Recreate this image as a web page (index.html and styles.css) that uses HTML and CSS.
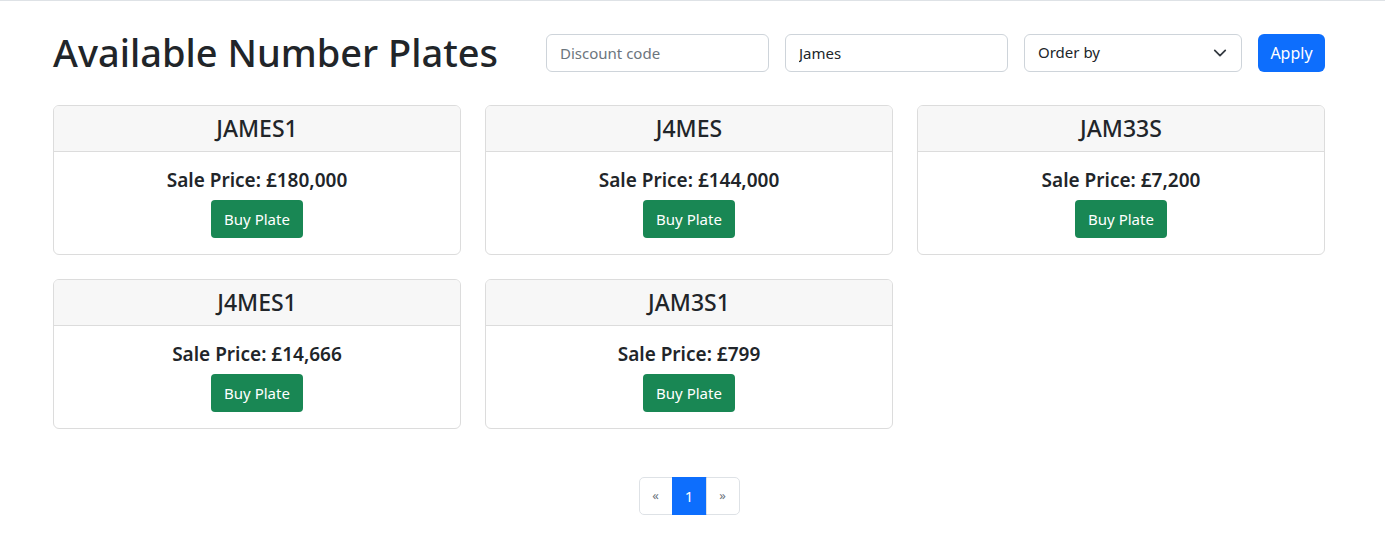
FILE: index.html
```html
<!DOCTYPE html>
<html lang="en">
<head>
<meta charset="utf-8">
<title>Available Number Plates</title>
<link rel="stylesheet" href="styles.css">
</head>
<body>
<div class="topline"></div>
<main class="page">
  <header class="toolbar">
    <h1 class="title">Available Number Plates</h1>
    <form class="filters">
      <input class="field" type="text" placeholder="Discount code">
      <input class="field" type="text" value="James">
      <div class="select">
        <span>Order by</span>
        <svg class="chev" width="14" height="14" viewBox="0 0 16 16"><path d="M2 5l6 6 6-6" fill="none" stroke="#343a40" stroke-width="2" stroke-linecap="round" stroke-linejoin="round"/></svg>
      </div>
      <button class="btn-apply" type="button">Apply</button>
    </form>
  </header>

  <section class="grid">
    <div class="card"><div class="card-head">JAMES1</div><div class="card-body"><div class="price">Sale Price: £180,000</div><button class="btn-buy" type="button">Buy Plate</button></div></div>
    <div class="card"><div class="card-head">J4MES</div><div class="card-body"><div class="price">Sale Price: £144,000</div><button class="btn-buy" type="button">Buy Plate</button></div></div>
    <div class="card"><div class="card-head">JAM33S</div><div class="card-body"><div class="price">Sale Price: £7,200</div><button class="btn-buy" type="button">Buy Plate</button></div></div>
    <div class="card"><div class="card-head">J4MES1</div><div class="card-body"><div class="price">Sale Price: £14,666</div><button class="btn-buy" type="button">Buy Plate</button></div></div>
    <div class="card"><div class="card-head">JAM3S1</div><div class="card-body"><div class="price">Sale Price: £799</div><button class="btn-buy" type="button">Buy Plate</button></div></div>
  </section>

  <nav class="pager">
    <span class="page-item disabled">«</span>
    <span class="page-item active">1</span>
    <span class="page-item disabled">»</span>
  </nav>
</main>
</body>
</html>
```

FILE: styles.css
```css
* { box-sizing: border-box; }
html, body { margin: 0; padding: 0; background: #fff; }
body {
  font-family: "Noto Sans", "Open Sans", sans-serif;
  color: #212529;
  font-size: 16px;
  line-height: 1.5;
}
.topline { height: 1px; background: #dee2e6; }
.page { padding: 32px 60px 0 53px; }
.toolbar {
  display: flex;
  align-items: center;
  justify-content: space-between;
  height: 39px;
}
.title {
  margin: 0;
  font-size: 38px;
  font-weight: 500;
  line-height: 1.2;
}
.filters { display: flex; gap: 16px; align-items: center; }
.field, .select {
  height: 38px;
  border: 1px solid #ced4da;
  border-radius: 6px;
  font: inherit;
  font-size: 15px;
  color: #212529;
  padding: 6px 13px;
  background: #fff;
}
.field { width: 223px; }
.field::placeholder { color: #6c757d; }
.select {
  width: 218px;
  display: flex;
  align-items: center;
  justify-content: space-between;
  padding-right: 14px;
}
.btn-apply {
  height: 38px;
  width: 67px;
  border: 0;
  border-radius: 6px;
  background: #0d6efd;
  color: #fff;
  font: inherit;
  font-size: 16px;
  padding: 0;
}
.grid {
  margin-top: 33px;
  display: grid;
  grid-template-columns: repeat(3, 408px);
  column-gap: 24px;
  row-gap: 24px;
}
.card {
  border: 1px solid #dcdcdc;
  border-radius: 6px;
  overflow: hidden;
}
.card-head {
  background: #f7f7f7;
  border-bottom: 1px solid #dcdcdc;
  text-align: center;
  font-size: 23px;
  font-weight: 500;
  line-height: 29px;
  padding: 8px 16px;
}
.card-body {
  padding: 16px;
  display: flex;
  flex-direction: column;
  align-items: center;
}
.price {
  font-size: 19px;
  font-weight: 600;
  line-height: 24px;
  margin-bottom: 8px;
}
.btn-buy {
  height: 38px;
  width: 92px;
  border: 0;
  border-radius: 4px;
  background: #198754;
  color: #fff;
  font: inherit;
  font-size: 15px;
  padding: 0;
}
.pager {
  margin-top: 48px;
  display: flex;
  justify-content: center;
}
.page-item {
  height: 38px;
  width: 34px;
  display: flex;
  align-items: center;
  justify-content: center;
  border: 1px solid #dee2e6;
  font-size: 15px;
}
.page-item + .page-item { margin-left: -1px; }
.page-item:first-child { border-radius: 5px 0 0 5px; }
.page-item:last-child { border-radius: 0 5px 5px 0; }
.page-item.disabled { color: #6c757d; font-size: 13px; }
.page-item.active { background: #0d6efd; border-color: #0d6efd; color: #fff; width: 35px; }
```
